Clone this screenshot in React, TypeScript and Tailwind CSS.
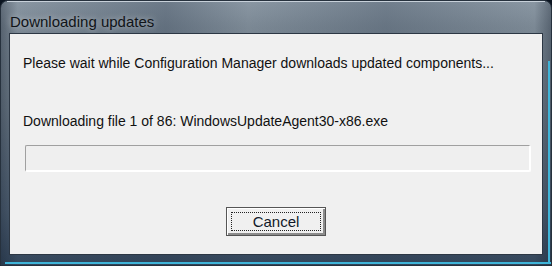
import React from "react";

export default function App() {
  return (
    <div className="w-[552px] h-[266px] overflow-hidden bg-[#0b1420]">
      <div
        className="relative w-[552px] h-[266px] rounded-t-[8px] border border-[#26313d] flex flex-col"
        style={{
          background:
            "linear-gradient(90deg, rgba(20,30,45,0.35) 0%, rgba(0,0,0,0) 3%, rgba(40,55,75,0.3) 30%, rgba(0,0,0,0) 45%, rgba(40,55,75,0.25) 70%, rgba(0,0,0,0) 97%, rgba(20,30,45,0.35) 100%), linear-gradient(180deg, #8a97a3 0%, #7b8894 10%, #6c7a87 40%, #4d5e71 80%, #33465b 100%)",
        }}
      >
        <div className="absolute left-[6px] right-[6px] top-0 h-px bg-[#c7d0d9]" />
        <div className="h-[32px] shrink-0 pl-[9px] pt-[8px]">
          <span className="font-['Liberation_Sans',Arial,sans-serif] text-[15px] leading-[18px] text-[#101418] [text-shadow:0_0_6px_rgba(255,255,255,0.6)]">
            Downloading updates
          </span>
        </div>
        <div className="mx-[8px] h-[222px] border border-[#2c3744] bg-[#f0f0f0] flex flex-col font-['Liberation_Sans',Arial,sans-serif] text-[14px] leading-[16px] text-[#111]">
          <div className="pl-[13px] mt-[21px]">
            Please wait while Configuration Manager downloads updated components...
          </div>
          <div className="pl-[13px] mt-[42px]">
            Downloading file 1 of 86: WindowsUpdateAgent30-x86.exe
          </div>
          <div className="ml-[15px] mr-[11px] mt-[16px] h-[27px] rounded-[2px] border-t border-l border-[#a0a0a0] border-r-white border-b-white border-r-2 border-b-2 bg-[#efefef]" />
          <div className="mt-[35px] flex justify-center">
            <div className="w-[100px] h-[29px] border border-[#555] bg-[#f0f0f0] shadow-[inset_1px_1px_0_#ffffff,inset_-2px_-2px_0_#8c8c8c] p-[4px]">
              <div className="w-full h-full border border-dotted border-[#222] flex items-center justify-center text-[15px] leading-none text-[#101828]">
                Cancel
              </div>
            </div>
          </div>
        </div>
        <div className="absolute left-[4px] right-0 bottom-[1px] h-[2px] bg-[#3fb4d8]" />
        <div className="absolute right-[1px] top-[60px] bottom-[1px] w-[2px] bg-[#3fb4d8]" />
      </div>
    </div>
  );
}
